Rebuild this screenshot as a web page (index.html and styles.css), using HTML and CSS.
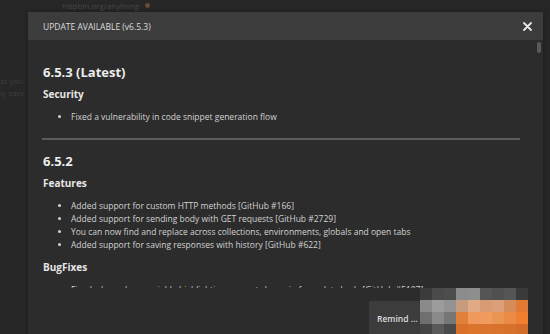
FILE: index.html
```html
<!DOCTYPE html>
<html lang="en">
<head>
    <meta charset="UTF-8">
    <meta name="viewport" content="width=device-width, initial-scale=1.0">
    <title>Update available</title>
    <link rel="stylesheet" href="styles.css">
</head>
<body>
    <div class="backdrop">
        <div class="backdrop-top">
            <span class="req-name">httpbin.org/anything</span>
            <span class="req-dot"></span>
        </div>
        <div class="backdrop-side">
            <p>at you</p>
            <p>ly save</p>
        </div>
    </div>

    <div class="modal">
        <div class="modal-header">
            <span class="modal-title">UPDATE AVAILABLE (v6.5.3)</span>
            <svg class="close" width="9" height="9" viewBox="0 0 9 9">
                <path d="M1 1 L8 8 M8 1 L1 8" stroke="#e6e6e6" stroke-width="1.8" stroke-linecap="round"/>
            </svg>
        </div>

        <div class="modal-body">
            <div class="notes">
                <h2>6.5.3 (Latest)</h2>
                <h3>Security</h3>
                <ul>
                    <li>Fixed a vulnerability in code snippet generation flow</li>
                </ul>
                <hr>
                <h2>6.5.2</h2>
                <h3>Features</h3>
                <ul>
                    <li>Added support for custom HTTP methods [GitHub #166]</li>
                    <li>Added support for sending body with GET requests [GitHub #2729]</li>
                    <li>You can now find and replace across collections, environments, globals and open tabs</li>
                    <li>Added support for saving responses with history [GitHub #622]</li>
                </ul>
                <h3>BugFixes</h3>
                <ul>
                    <li>Fixed a bug where variable highlighting was not shown in form-data body [GitHub #5107]</li>
                </ul>
            </div>
            <div class="scroll-thumb"></div>
        </div>

        <div class="modal-footer">
            <button class="btn btn-secondary">Remind me later</button>
            <button class="btn btn-primary">Update</button>
        </div>
    </div>

    <!-- pixelated area in the screenshot -->
    <div class="mosaic">
        <i style="background:#3b3b3b"></i><i style="background:#4a4a4a"></i><i style="background:#4d4d4d"></i><i style="background:#8c8c8c"></i><i style="background:#8e8e8e"></i><i style="background:#555"></i><i style="background:#505050"></i><i style="background:#555"></i><i style="background:#3a3a3a"></i>
        <i style="background:#8a8a8a"></i><i style="background:#9c9c9c"></i><i style="background:#939393"></i><i style="background:#c79c7c"></i><i style="background:#e0aa84"></i><i style="background:#d99b72"></i><i style="background:#dba07a"></i><i style="background:#d68c58"></i><i style="background:#e07a35"></i>
        <i style="background:#6f6f6f"></i><i style="background:#8a8a8a"></i><i style="background:#777"></i><i style="background:#e0803a"></i><i style="background:#ef9a5c"></i><i style="background:#f09c60"></i><i style="background:#ec9452"></i><i style="background:#ea8a45"></i><i style="background:#f08030"></i>
        <i style="background:#444"></i><i style="background:#5a5a5a"></i><i style="background:#4a4a4a"></i><i style="background:#d8702a"></i><i style="background:#db742c"></i><i style="background:#d9742e"></i><i style="background:#d8722c"></i><i style="background:#d6702a"></i><i style="background:#d36c28"></i>
    </div>
</body>
</html>
```

FILE: styles.css
```css
body {
    margin: 0;
    width: 550px;
    height: 334px;
    overflow: hidden;
    background-color: #272727;
    font-family: "Open Sans", "Noto Sans", sans-serif;
    color: #e4e4e4;
}
.backdrop {
    height: 334px;
}
.backdrop-top {
    display: flex;
    align-items: center;
    gap: 6px;
    height: 11px;
    padding-left: 62px;
}
.req-name {
    font-size: 8px;
    line-height: 10px;
    color: #4a4a4a;
}
.req-dot {
    width: 5px;
    height: 5px;
    border-radius: 50%;
    background: #6a4a30;
}
.backdrop-side {
    margin-top: 64px;
    font-size: 8px;
    line-height: 12px;
    color: #3e3e3e;
}
.backdrop-side p {
    margin: 0;
}

.modal {
    position: absolute;
    left: 28px;
    top: 12px;
    width: 515px;
    height: 330px;
    background: #2c2c2c;
    box-shadow: 0 0 6px rgba(0,0,0,0.35);
}
.modal-header {
    display: flex;
    align-items: center;
    justify-content: space-between;
    height: 28px;
    padding: 0 11px 0 15px;
    background: #3c3c3c;
}
.modal-title {
    font-size: 8.5px;
    color: #dcdcdc;
}
.modal-body {
    position: relative;
    height: 248px;
    overflow: hidden;
}
.notes {
    padding: 24px 23px 0 15px;
}
.scroll-thumb {
    position: absolute;
    right: 2px;
    top: 2px;
    width: 4px;
    height: 11px;
    border-radius: 2px;
    background: #5a5a5a;
}
h2 {
    margin: 0 0 8px;
    font-size: 13px;
    line-height: 16px;
    font-weight: 700;
    color: #ececec;
}
h3 {
    margin: 0 0 10px;
    font-size: 10px;
    line-height: 12px;
    font-weight: 700;
    color: #e6e6e6;
}
ul {
    margin: 0 0 10px;
    padding-left: 28px;
    font-size: 8.5px;
    line-height: 13px;
    color: #d2d2d2;
}
li {
    white-space: nowrap;
}
hr {
    margin: 15px 0 13px -1px;
    border: none;
    height: 2px;
    background: #5c5c5c;
}
.modal-footer {
    display: flex;
    justify-content: flex-end;
    padding: 11px 15px 0;
}
.btn {
    height: 34px;
    border: none;
    border-radius: 2px;
    font-family: inherit;
    font-size: 8.5px;
    font-weight: 600;
    color: #dcdcdc;
    padding: 0 8px;
    white-space: nowrap;
    overflow: hidden;
    text-overflow: ellipsis;
}
.btn-secondary {
    background: #3c3c3c;
    margin-top: 2px;
    margin-right: 31px;
    width: 57px;
    text-align: left;
}
.btn-primary {
    background: #e8782c;
    color: #fff;
    width: 71px;
}

.mosaic {
    position: absolute;
    left: 420px;
    top: 288px;
    display: grid;
    grid-template-columns: repeat(9, 12px);
    grid-auto-rows: 12px;
}
.mosaic i {
    display: block;
}
```
